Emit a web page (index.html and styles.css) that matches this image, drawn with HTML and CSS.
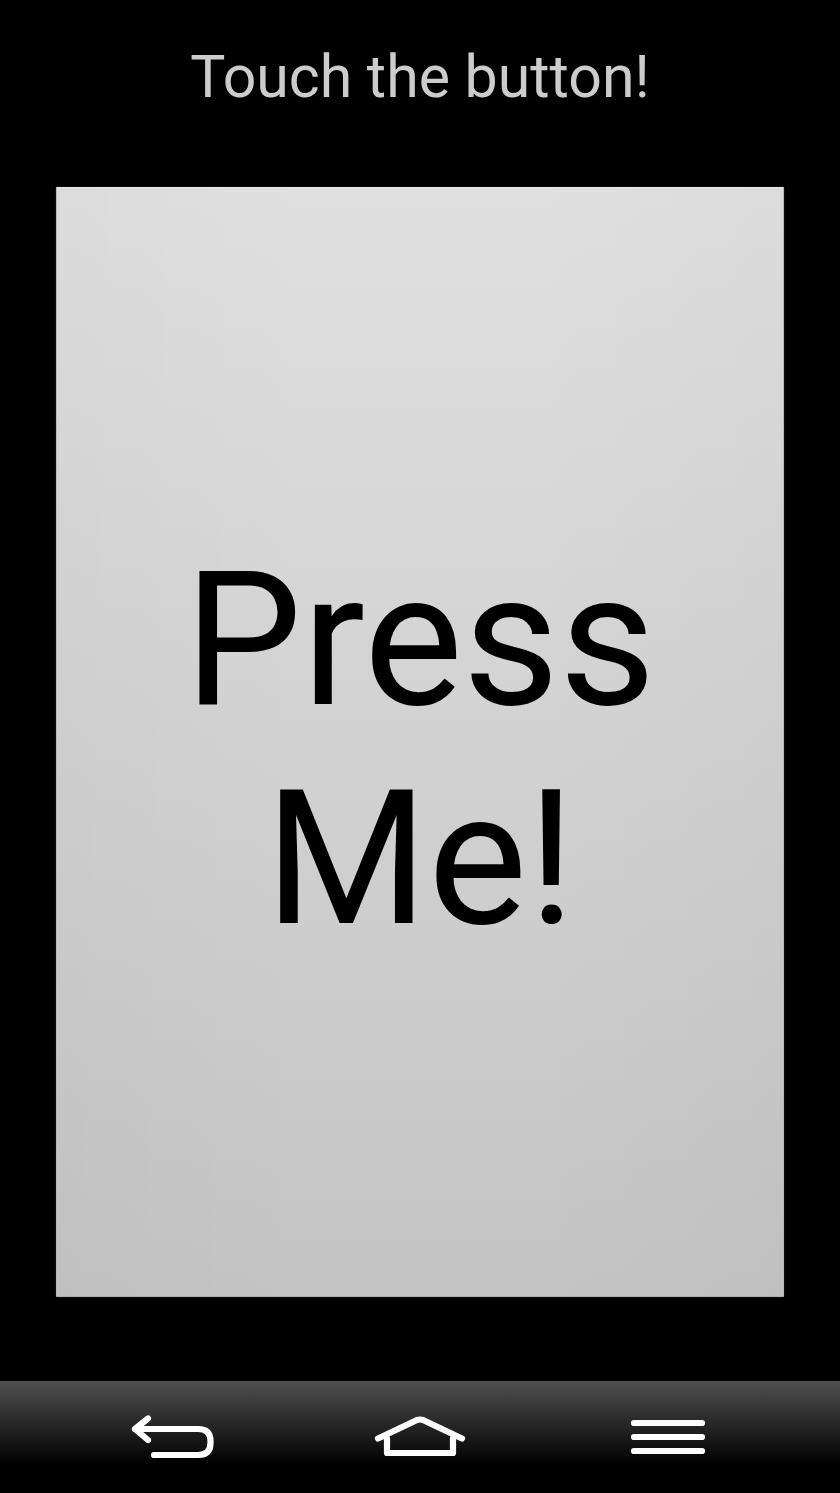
FILE: index.html
```html
<!DOCTYPE html>
<html lang="en">
<head>
<meta charset="utf-8">
<title>Touch the button</title>
<link rel="stylesheet" href="styles.css">
</head>
<body>
<main class="screen">
  <h1 class="title">Touch the button!</h1>
  <button class="press" type="button">Press<br>Me!</button>
</main>
<nav class="navbar">
  <svg class="nav-icon" viewBox="0 0 840 112" aria-hidden="true">
    <path class="glyph" d="M148 37.500 L135 48 L148 59 M135 48 H198 Q210.500 48 210.500 60 V62 Q210.500 74 198 74 H154"/>
    <path class="glyph" d="M378 57.500 L417 39 Q420 38 423 39 L462 57.500 M387 57.500 V72 H453 V57.500"/>
    <path class="glyph" d="M634 42 H702 M634 56 H702 M634 70 H702"/>
  </svg>
</nav>
</body>
</html>
```
FILE: styles.css
```css
* { box-sizing: border-box; }
html, body { margin: 0; padding: 0; background: #000; }
body {
  width: 840px;
  height: 1493px;
  display: flex;
  flex-direction: column;
  font-family: Roboto, "Liberation Sans", sans-serif;
  overflow: hidden;
}
.screen {
  flex: 0 0 1381px;
  display: flex;
  flex-direction: column;
  align-items: center;
}
.title {
  margin: 0;
  height: 187px;
  padding-top: 41px;
  font-size: 59px;
  line-height: 72px;
  font-weight: 400;
  color: #cccccc;
}
.press {
  width: 728px;
  height: 1110px;
  margin: 0;
  padding: 16px 0 0;
  font-family: inherit;
  font-size: 187px;
  line-height: 219px;
  font-weight: 400;
  color: #000;
  border: 1px solid #b8b8b8;
  border-top-color: #e8e8e8;
  border-bottom-color: #acacac;
  border-radius: 1px;
  box-shadow: 0 0 1px rgba(190, 190, 190, 0.6);
  background:
    linear-gradient(90deg, rgba(0, 0, 0, 0.02), rgba(0, 0, 0, 0) 35%, rgba(0, 0, 0, 0) 65%, rgba(0, 0, 0, 0.02)),
    linear-gradient(180deg, #e0e0e0 0%, #c4c4c4 100%);
}
.navbar {
  flex: 0 0 112px;
  background: linear-gradient(180deg, #505050 0%, #1a1a1a 50%, #000 75%);
}
.nav-icon { display: block; width: 840px; height: 112px; filter: blur(0.4px); }
.glyph {
  fill: none;
  stroke: #fff;
  stroke-width: 6.200;
  stroke-linecap: round;
  stroke-linejoin: round;
}
```
